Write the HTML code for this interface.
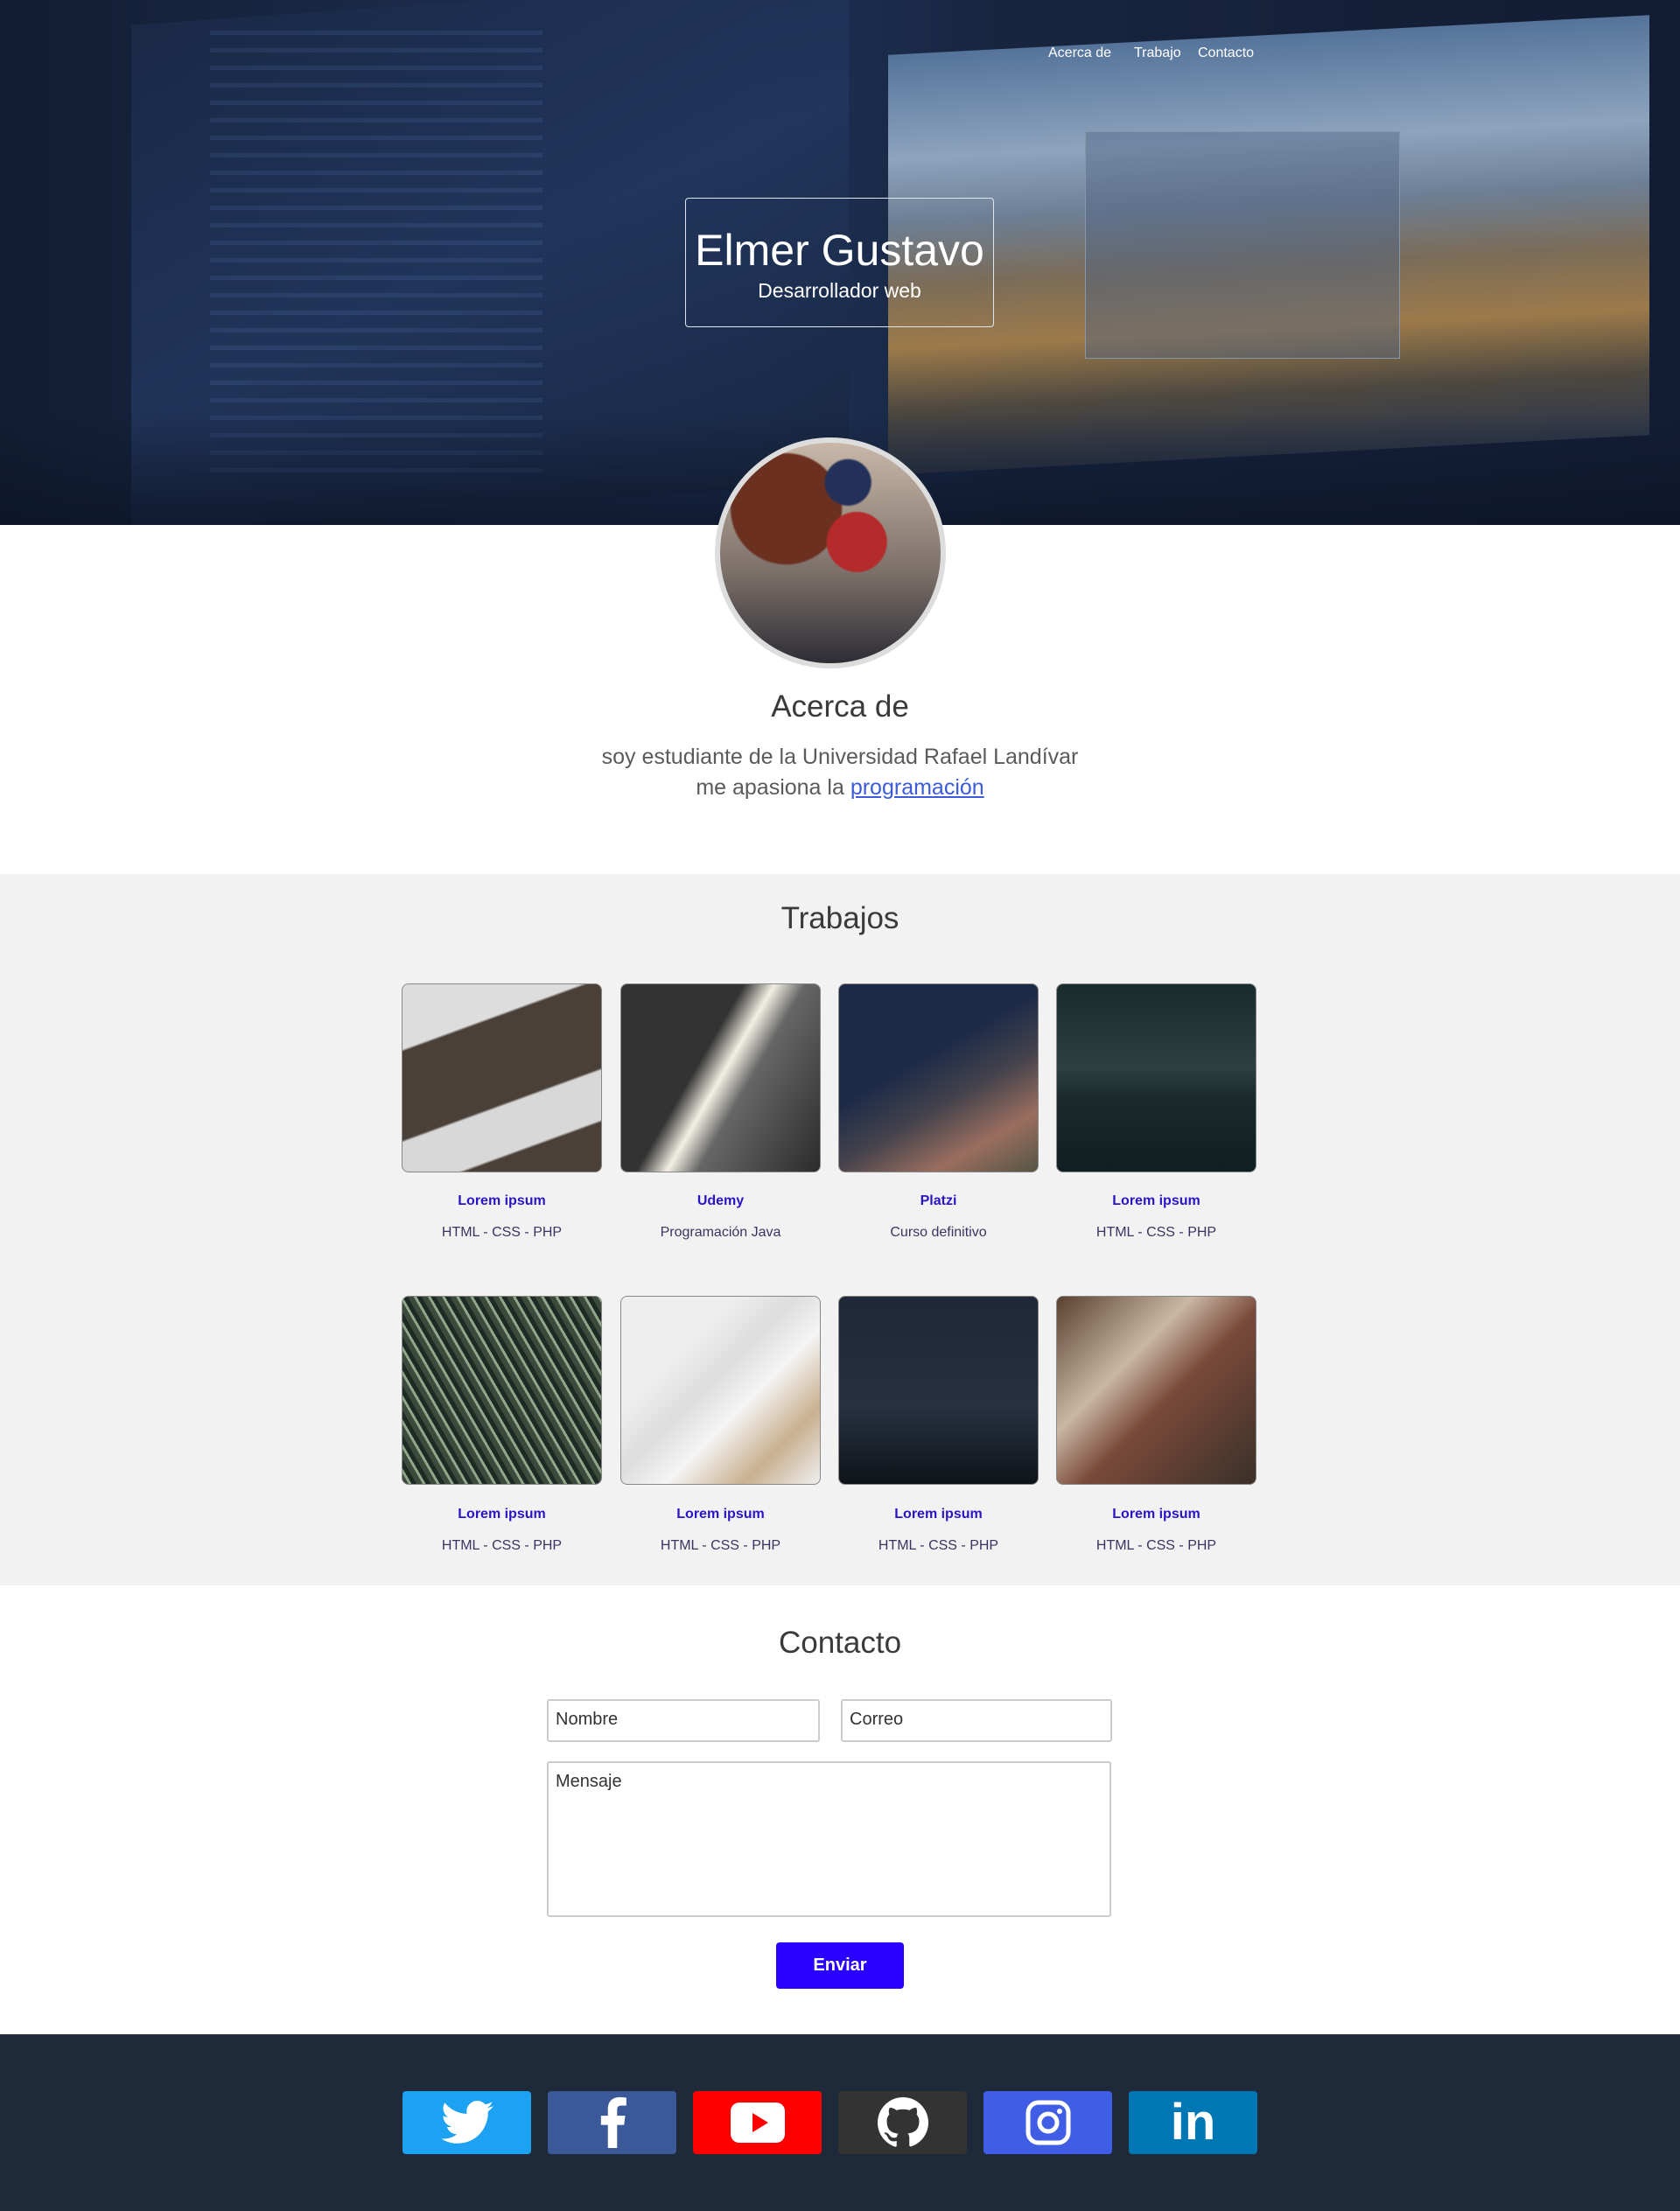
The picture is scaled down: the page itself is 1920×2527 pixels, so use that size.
<!DOCTYPE html>
<html><head><meta charset="utf-8"><style>
*{margin:0;padding:0;box-sizing:border-box}
body{width:1920px;height:2527px;font-family:"Liberation Sans",sans-serif;background:#fff;position:relative;overflow:hidden}
.abs{position:absolute}
#hero{left:0;top:0;width:1920px;height:600px;background:linear-gradient(90deg,#121d33 0%,#1a2a48 25%,#1e3156 45%,#17253f 60%,#121c33 100%);overflow:hidden}
.nav{color:#fff;font-size:16px;top:52px}
.tb{left:783px;top:226px;width:353px;height:148px;border:1px solid #dfe6f0;border-radius:4px;color:#fff;text-align:center}
.card{width:229px;height:216px;border-radius:8px;border:1px solid #888}
.l1{width:229px;text-align:center;color:#2a14c8;font-weight:bold;font-size:16px}
.l2{width:229px;text-align:center;color:#3a3560;font-size:16px}
.fld{border:2px solid #ccc;border-radius:3px;font-size:20px;color:#333;padding:10px 8px;background:#fff}
.ic{width:147px;height:72px;top:2390px;border-radius:4px;display:flex;align-items:center;justify-content:center}
h2{font-weight:normal}
</style></head><body>
<div id="hero" class="abs">
 <div class="abs" style="left:150px;top:0;width:820px;height:580px;background:linear-gradient(160deg,#1a2a48,#22375e 50%,#17263f);transform:skewY(-4deg);opacity:.85"></div>
 <div class="abs" style="left:240px;top:20px;width:380px;height:520px;background:repeating-linear-gradient(0deg,rgba(110,150,220,.12) 0 5px,transparent 5px 20px)"></div>
 <div class="abs" style="left:1015px;top:40px;width:870px;height:480px;background:linear-gradient(180deg,#55739a 0%,#8da4bd 25%,#6d7f95 40%,#7b6c58 55%,#9c7a4a 70%,#4d4840 85%,#30384a 100%);transform:skewY(-3deg)"></div>
 <div class="abs" style="left:1240px;top:150px;width:360px;height:260px;background:rgba(80,100,130,.45);border:1px solid #8797aa"></div>
 <div class="abs" style="left:0;top:470px;width:1920px;height:130px;background:linear-gradient(180deg,transparent,rgba(12,20,38,.75))"></div>
 <div class="abs nav" style="left:1198px">Acerca de</div>
 <div class="abs nav" style="left:1296px">Trabajo</div>
 <div class="abs nav" style="left:1369px">Contacto</div>
 <div class="abs tb"><div style="font-size:50px;margin-top:30px">Elmer Gustavo</div><div style="font-size:23px;margin-top:4px">Desarrollador web</div></div>
</div>
<div class="abs" style="left:817px;top:500px;width:264px;height:264px;border-radius:50%;background:#ddd;padding:6px"><div style="width:100%;height:100%;border-radius:50%;background:radial-gradient(circle at 62% 45%,#b52a2a 0 16%,transparent 17%),radial-gradient(circle at 58% 18%,#22305a 0 10%,transparent 11%),radial-gradient(circle at 30% 30%,#6b3020 0 25%,transparent 26%),linear-gradient(180deg,#c9b8a8,#7a6e68 60%,#2d2d35)"></div></div>
<div class="abs" style="left:0;top:788px;width:1920px;text-align:center;font-size:35px;color:#3a3a3a">Acerca de</div>
<div class="abs" style="left:0;top:848px;width:1920px;text-align:center;font-size:25px;color:#5a5a5a;line-height:35px">soy estudiante de la Universidad Rafael Landívar<br>me apasiona la <span style="color:#3b5bdb;text-decoration:underline">programación</span></div>
<div class="abs" style="left:0;top:999px;width:1920px;height:813px;background:#f2f2f2"></div>
<div class="abs" style="left:0;top:1030px;width:1920px;text-align:center;font-size:35px;color:#3a3a3a">Trabajos</div>
<div class="abs card" style="left:459px;top:1124px;background:linear-gradient(160deg,#ddd 0 25%,#4a4038 26% 60%,#d8d8d8 61% 80%,#4a4038 81%)"></div>
<div class="abs card" style="left:709px;top:1124px;background:linear-gradient(120deg,#333 0 40%,#f3efe4 50%,#666 60%,#2b2b2b)"></div>
<div class="abs card" style="left:958px;top:1124px;background:linear-gradient(150deg,#1c2a48 0 40%,#45434c 60%,#9a6e5f 80%,#554)"></div>
<div class="abs card" style="left:1207px;top:1124px;background:linear-gradient(180deg,#1a2b2b,#2c4040 45%,#1b2a2a 60%,#0f1f22)"></div>
<div class="abs l1" style="left:459px;top:1364px">Lorem ipsum</div><div class="abs l2" style="left:459px;top:1400px">HTML - CSS - PHP</div>
<div class="abs l1" style="left:709px;top:1364px">Udemy</div><div class="abs l2" style="left:709px;top:1400px">Programación Java</div>
<div class="abs l1" style="left:958px;top:1364px">Platzi</div><div class="abs l2" style="left:958px;top:1400px">Curso definitivo</div>
<div class="abs l1" style="left:1207px;top:1364px">Lorem ipsum</div><div class="abs l2" style="left:1207px;top:1400px">HTML - CSS - PHP</div>
<div class="abs card" style="left:459px;top:1481px;background:repeating-linear-gradient(60deg,#3b4a3a 0 6px,#8fa68a 6px 9px,#1e2a24 9px 14px)"></div>
<div class="abs card" style="left:709px;top:1481px;background:linear-gradient(135deg,#eee 0 30%,#ddd 45%,#f4f4f4 60%,#c9b090 80%,#eee)"></div>
<div class="abs card" style="left:958px;top:1481px;background:linear-gradient(180deg,#1e2838,#263040 60%,#0f1418)"></div>
<div class="abs card" style="left:1207px;top:1481px;background:linear-gradient(135deg,#5a4030,#c9b7a4 35%,#7a4a3a 55%,#3a3028)"></div>
<div class="abs l1" style="left:459px;top:1722px">Lorem ipsum</div><div class="abs l2" style="left:459px;top:1758px">HTML - CSS - PHP</div>
<div class="abs l1" style="left:709px;top:1722px">Lorem ipsum</div><div class="abs l2" style="left:709px;top:1758px">HTML - CSS - PHP</div>
<div class="abs l1" style="left:958px;top:1722px">Lorem ipsum</div><div class="abs l2" style="left:958px;top:1758px">HTML - CSS - PHP</div>
<div class="abs l1" style="left:1207px;top:1722px">Lorem ipsum</div><div class="abs l2" style="left:1207px;top:1758px">HTML - CSS - PHP</div>
<div class="abs" style="left:0;top:1858px;width:1920px;text-align:center;font-size:35px;color:#3a3a3a">Contacto</div>
<div class="abs fld" style="left:625px;top:1942px;width:312px;height:49px">Nombre</div>
<div class="abs fld" style="left:961px;top:1942px;width:310px;height:49px">Correo</div>
<div class="abs fld" style="left:625px;top:2013px;width:645px;height:178px">Mensaje</div>
<div class="abs" style="left:887px;top:2220px;width:146px;height:53px;background:#2a00ff;border-radius:4px;color:#fff;font-weight:bold;font-size:20px;text-align:center;line-height:53px">Enviar</div>
<div class="abs" style="left:0;top:2325px;width:1920px;height:202px;background:#1e2a3a"></div>
<div class="abs ic" style="left:460px;background:#1da1f2"><svg width="60" height="50" viewBox="0 0 24 20"><path fill="#fff" d="M24 2.4c-.9.4-1.8.7-2.8.8 1-.6 1.8-1.6 2.2-2.7-1 .6-2 1-3.1 1.2C19.3.7 18 0 16.6 0c-2.7 0-4.9 2.2-4.9 4.9 0 .4 0 .8.1 1.1C7.7 5.8 4.1 3.9 1.7.9c-.4.7-.7 1.6-.7 2.5 0 1.7.9 3.2 2.2 4.1-.8 0-1.6-.2-2.2-.6v.1c0 2.4 1.7 4.4 3.900 4.8-.4.1-.8.2-1.3.2-.3 0-.6 0-.9-.1.6 2 2.4 3.4 4.6 3.4-1.7 1.300-3.8 2.1-6.1 2.1-.4 0-.8 0-1.2-.1 2.2 1.4 4.8 2.2 7.5 2.2 9.1 0 14-7.5 14-14v-.6c1-.7 1.8-1.6 2.5-2.5z"/></svg></div>
<div class="abs ic" style="left:626px;background:#3b5998"><svg width="36" height="58" viewBox="0 0 12 22"><path fill="#fff" d="M8 22V12h3l.5-4H8V5.5C8 4.4 8.3 3.6 9.9 3.6H12V.2C11.6.1 10.4 0 9 0 6 0 4 1.8 4 5.1V8H1v4h3v10z"/></svg></div>
<div class="abs ic" style="left:792px;background:#f00"><svg width="62" height="46" viewBox="0 0 62 46"><rect width="62" height="46" rx="10" fill="#fff"/><path d="M25 12v22l18-11z" fill="#f00"/></svg></div>
<div class="abs ic" style="left:958px;background:#333"><svg width="58" height="58" viewBox="0 0 16 16"><path fill="#fff" d="M8 0C3.6 0 0 3.6 0 8c0 3.5 2.3 6.5 5.5 7.6.4.1.5-.2.5-.4v-1.4c-2.2.5-2.7-1-2.7-1-.4-.9-.9-1.2-.9-1.2-.7-.5.1-.5.1-.5.8.1 1.2.8 1.2.8.7 1.2 1.9.9 2.3.7.1-.5.3-.9.5-1.1-1.8-.2-3.6-.9-3.6-4 0-.9.3-1.6.8-2.1-.1-.2-.4-1 .1-2.1 0 0 .7-.2 2.2.8.6-.2 1.3-.3 2-.3s1.4.1 2 .3c1.5-1 2.2-.8 2.2-.8.4 1.1.2 1.9.1 2.1.5.6.8 1.3.8 2.100 0 3.1-1.9 3.7-3.6 3.9.3.3.5.8.5 1.5v2.2c0 .2.1.5.6.4C13.7 14.5 16 11.5 16 8c0-4.4-3.6-8-8-8z"/></svg></div>
<div class="abs ic" style="left:1124px;background:#405de6"><svg width="52" height="52" viewBox="0 0 52 52"><rect x="3" y="3" width="46" height="46" rx="12" fill="none" stroke="#fff" stroke-width="5"/><circle cx="26" cy="26" r="10" fill="none" stroke="#fff" stroke-width="5"/><circle cx="39" cy="13" r="3" fill="#fff"/></svg></div>
<div class="abs ic" style="left:1290px;background:#0077b5"><span style="color:#fff;font-weight:bold;font-size:58px;line-height:1">in</span></div>
</body></html>
